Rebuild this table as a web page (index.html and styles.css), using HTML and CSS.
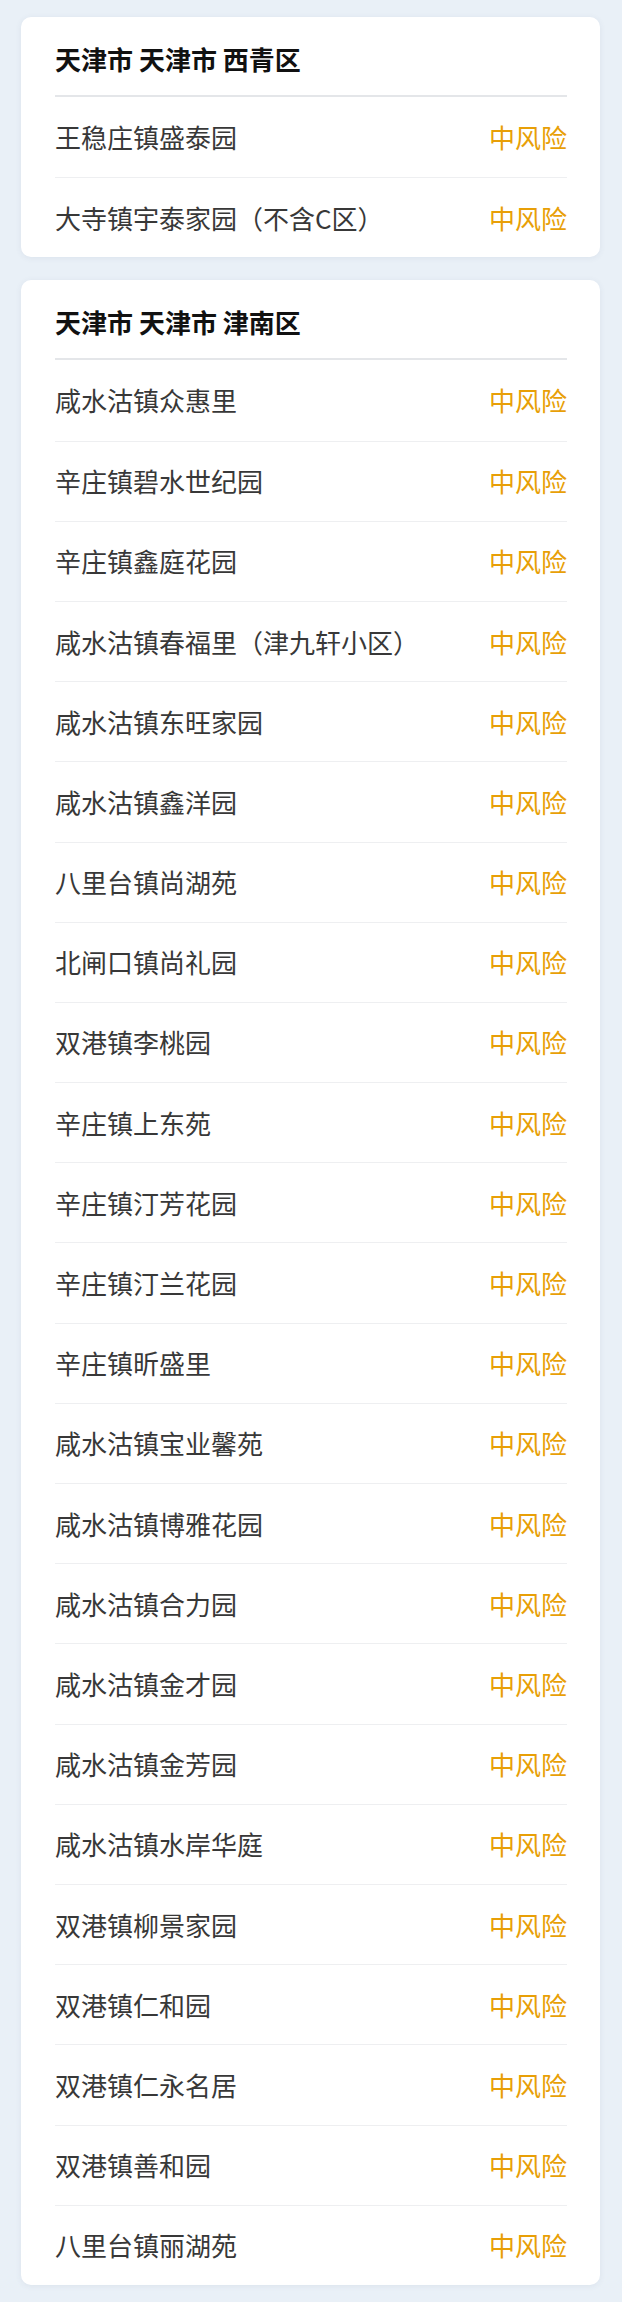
FILE: index.html
```html
<!DOCTYPE html>
<html lang="zh-CN">
<head>
<meta charset="utf-8">
<link rel="stylesheet" href="styles.css">
</head>
<body>
<div class="page">
  <section class="card">
    <div class="card-title">天津市 天津市 西青区</div>
    <ul class="list">
      <li class="row"><span class="name">王稳庄镇盛泰园</span><span class="risk">中风险</span></li>
      <li class="row"><span class="name">大寺镇宇泰家园（不含C区）</span><span class="risk">中风险</span></li>
    </ul>
  </section>
  <section class="card">
    <div class="card-title">天津市 天津市 津南区</div>
    <ul class="list">
      <li class="row"><span class="name">咸水沽镇众惠里</span><span class="risk">中风险</span></li>
      <li class="row"><span class="name">辛庄镇碧水世纪园</span><span class="risk">中风险</span></li>
      <li class="row"><span class="name">辛庄镇鑫庭花园</span><span class="risk">中风险</span></li>
      <li class="row"><span class="name">咸水沽镇春福里（津九轩小区）</span><span class="risk">中风险</span></li>
      <li class="row"><span class="name">咸水沽镇东旺家园</span><span class="risk">中风险</span></li>
      <li class="row"><span class="name">咸水沽镇鑫洋园</span><span class="risk">中风险</span></li>
      <li class="row"><span class="name">八里台镇尚湖苑</span><span class="risk">中风险</span></li>
      <li class="row"><span class="name">北闸口镇尚礼园</span><span class="risk">中风险</span></li>
      <li class="row"><span class="name">双港镇李桃园</span><span class="risk">中风险</span></li>
      <li class="row"><span class="name">辛庄镇上东苑</span><span class="risk">中风险</span></li>
      <li class="row"><span class="name">辛庄镇汀芳花园</span><span class="risk">中风险</span></li>
      <li class="row"><span class="name">辛庄镇汀兰花园</span><span class="risk">中风险</span></li>
      <li class="row"><span class="name">辛庄镇昕盛里</span><span class="risk">中风险</span></li>
      <li class="row"><span class="name">咸水沽镇宝业馨苑</span><span class="risk">中风险</span></li>
      <li class="row"><span class="name">咸水沽镇博雅花园</span><span class="risk">中风险</span></li>
      <li class="row"><span class="name">咸水沽镇合力园</span><span class="risk">中风险</span></li>
      <li class="row"><span class="name">咸水沽镇金才园</span><span class="risk">中风险</span></li>
      <li class="row"><span class="name">咸水沽镇金芳园</span><span class="risk">中风险</span></li>
      <li class="row"><span class="name">咸水沽镇水岸华庭</span><span class="risk">中风险</span></li>
      <li class="row"><span class="name">双港镇柳景家园</span><span class="risk">中风险</span></li>
      <li class="row"><span class="name">双港镇仁和园</span><span class="risk">中风险</span></li>
      <li class="row"><span class="name">双港镇仁永名居</span><span class="risk">中风险</span></li>
      <li class="row"><span class="name">双港镇善和园</span><span class="risk">中风险</span></li>
      <li class="row"><span class="name">八里台镇丽湖苑</span><span class="risk">中风险</span></li>
    </ul>
  </section>
</div>
</body>
</html>
```

FILE: styles.css
```css
html, body {
  margin: 0;
  padding: 0;
  background: #e9f0f7;
}
body {
  font-family: "Noto Sans CJK SC", "Noto Sans", sans-serif;
}
.page {
  display: flex;
  flex-direction: column;
  gap: 23px;
  padding: 17px 22px 17px 21px;
}
.card {
  background: #ffffff;
  border-radius: 10px;
  box-shadow: 0 1px 6px rgba(60, 80, 110, 0.08);
  padding: 0 33px 0 34px;
}
.card-title {
  height: 80px;
  box-sizing: border-box;
  padding-top: 6px;
  display: flex;
  align-items: center;
  font-size: 26px;
  font-weight: 700;
  color: #111111;
  border-bottom: 2px solid #e4e6e9;
  line-height: 1;
}
.list {
  list-style: none;
  margin: 0;
  padding: 0;
}
.row {
  height: 80.2px;
  box-sizing: border-box;
  display: flex;
  align-items: center;
  justify-content: space-between;
  font-size: 26px;
  line-height: 1;
  border-top: 1px solid #eeeff1;
}
.row:first-child {
  border-top: none;
}
.name {
  color: #383838;
}
.risk {
  color: #e89f07;
}
```
